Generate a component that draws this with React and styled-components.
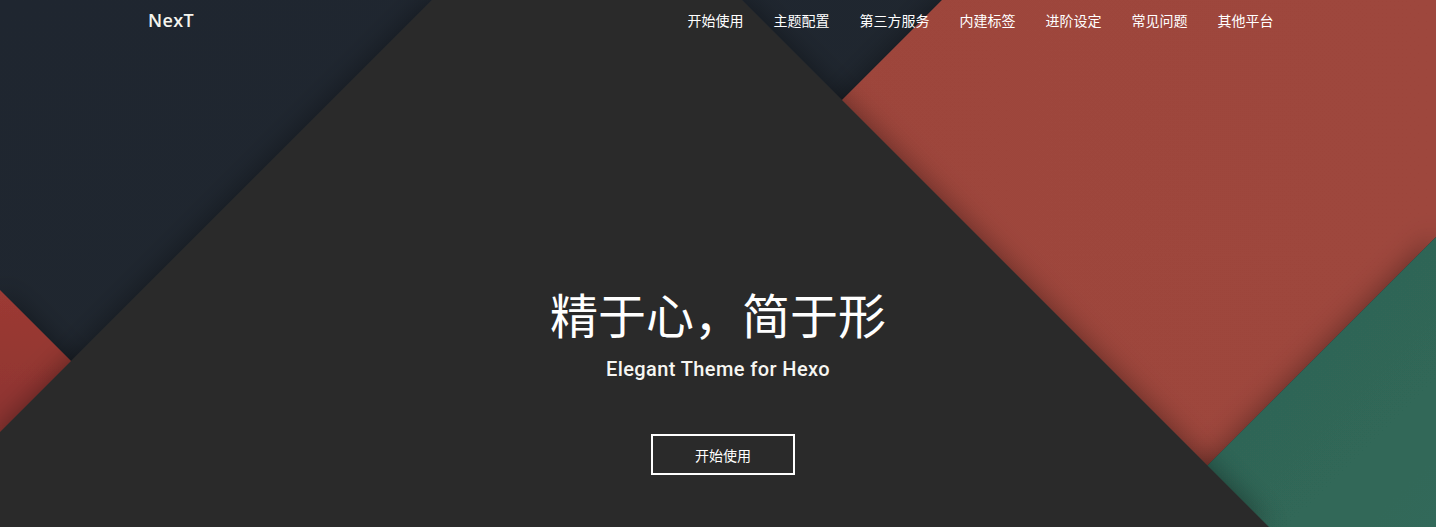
import React from "react";
import styled, { createGlobalStyle } from "styled-components";

const GlobalStyle = createGlobalStyle`
  html, body {
    margin: 0;
    padding: 0;
    background: #2a2a2c;
  }
  body {
    font-family: "Lato", "Noto Sans CJK SC", sans-serif;
    color: #fff;
  }
`;

const Page = styled.div`
  position: relative;
  width: 100%;
  height: 527px;
  overflow: hidden;
  background: #1f262e;
`;

const Backdrop = styled.svg`
  position: absolute;
  inset: 0;
  width: 100%;
  height: 100%;
  z-index: 0;
`;

const Content = styled.div`
  position: relative;
  z-index: 1;
  display: flex;
  flex-direction: column;
  height: 100%;
`;

const Header = styled.header`
  width: 1170px;
  margin: 0 auto;
  padding: 0 15px;
  box-sizing: border-box;
  height: 40px;
  display: flex;
  align-items: center;
  justify-content: space-between;
`;

const Logo = styled.a`
  font-family: "Open Sans", "Lato", sans-serif;
  font-size: 18px;
  font-weight: 600;
  letter-spacing: 0.4px;
  color: #f4f4ee;
  text-decoration: none;
`;

const Nav = styled.nav`
  display: flex;
`;

const NavLink = styled.a`
  font-family: "Noto Sans CJK SC", sans-serif;
  font-size: 14px;
  line-height: 40px;
  padding: 0 15px;
  color: #fff;
  text-decoration: none;

  &:last-child {
    padding-right: 14.5px;
  }
`;

const Hero = styled.section`
  display: flex;
  flex-direction: column;
  align-items: center;
  padding-top: 243px;
`;

const Title = styled.h1`
  margin: 0;
  font-family: "Noto Sans CJK SC", sans-serif;
  font-weight: 400;
  font-size: 48px;
  line-height: 60px;
  color: #fff;
`;

const Subtitle = styled.p`
  margin: 13px 0 0;
  font-family: "Roboto", "Noto Sans CJK SC", sans-serif;
  font-size: 20px;
  font-weight: 500;
  line-height: 26px;
  letter-spacing: 0.4px;
  color: #f6f6f2;
`;

const CTA = styled.a`
  margin: 52px 0 0 10px;
  width: 144px;
  height: 41px;
  box-sizing: border-box;
  border: 2px solid #fff;
  display: flex;
  align-items: center;
  justify-content: center;
  font-family: "Noto Sans CJK SC", sans-serif;
  font-size: 14px;
  color: #fff;
  text-decoration: none;
`;

const links = ["开始使用", "主题配置", "第三方服务", "内建标签", "进阶设定", "常见问题", "其他平台"];

function Shapes() {
  return (
    <Backdrop viewBox="0 0 1436 527" preserveAspectRatio="none">
      <defs>
        <linearGradient id="navy" x1="0" y1="0" x2="1" y2="1">
          <stop offset="0" stopColor="#1f2630" />
          <stop offset="0.6" stopColor="#20272f" />
          <stop offset="1" stopColor="#171c20" />
        </linearGradient>
        <linearGradient id="redL" x1="0" y1="0" x2="0" y2="1">
          <stop offset="0" stopColor="#9c3a34" />
          <stop offset="1" stopColor="#7e2e2b" />
        </linearGradient>
        <linearGradient id="red" x1="0" y1="0" x2="1" y2="0">
          <stop offset="0" stopColor="#9d453b" />
          <stop offset="1" stopColor="#9e463c" />
        </linearGradient>
        <linearGradient id="green" x1="0" y1="0" x2="1" y2="1">
          <stop offset="0" stopColor="#2d6152" />
          <stop offset="1" stopColor="#31695a" />
        </linearGradient>
        <filter id="shade" x="-20%" y="-20%" width="140%" height="140%">
          <feDropShadow dx="0" dy="0" stdDeviation="14" floodColor="#000" floodOpacity="0.4" />
        </filter>
      </defs>
      <rect x="0" y="0" width="1436" height="527" fill="url(#navy)" />
      <polygon points="0,290 145,435 0,580" fill="url(#redL)" filter="url(#shade)" />
      <polygon points="942,0 1436,0 1436,237 1146,527 600,527 600,342" fill="url(#red)" filter="url(#shade)" />
      <polygon points="1436,237 1436,527 1146,527" fill="url(#green)" filter="url(#shade)" />
      <polygon points="432,0 742,0 1269,527 0,527 0,432" fill="#2a2a2c" filter="url(#shade)" />
    </Backdrop>
  );
}

export default function App() {
  return (
    <>
      <GlobalStyle />
      <Page>
        <Shapes />
        <Content>
          <Header>
            <Logo href="#">NexT</Logo>
            <Nav>
              {links.map((l) => (
                <NavLink key={l} href="#">
                  {l}
                </NavLink>
              ))}
            </Nav>
          </Header>
          <Hero>
            <Title>精于心，简于形</Title>
            <Subtitle>Elegant Theme for Hexo</Subtitle>
            <CTA href="#">开始使用</CTA>
          </Hero>
        </Content>
      </Page>
    </>
  );
}
